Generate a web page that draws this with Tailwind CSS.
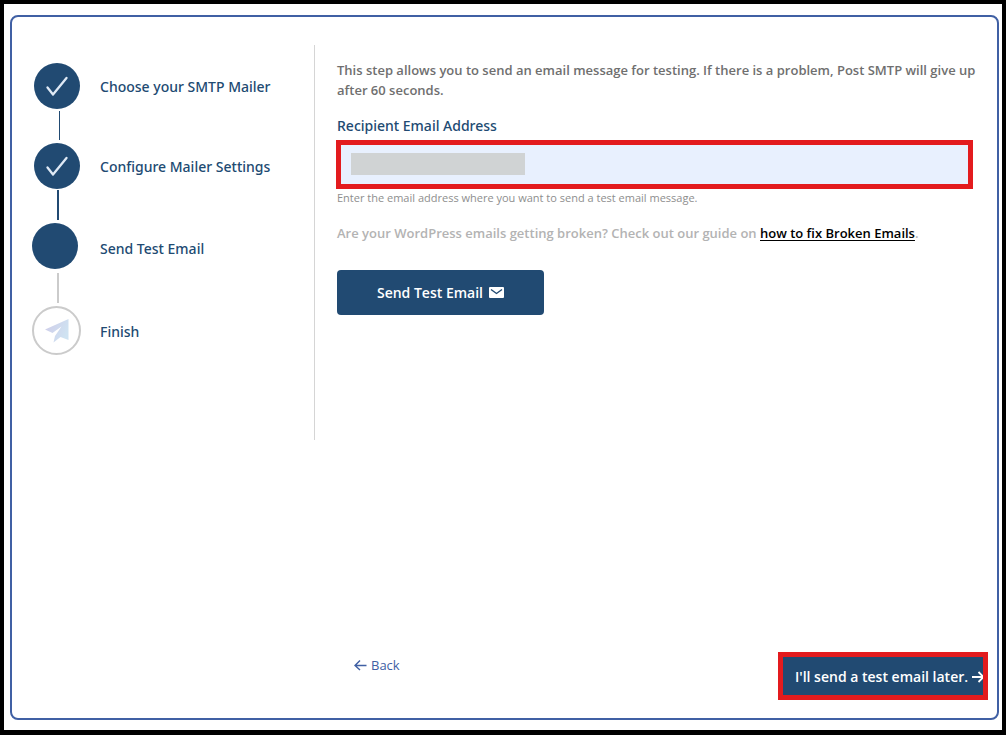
<!DOCTYPE html>
<html lang="en">
<head>
<meta charset="utf-8">
<meta name="viewport" content="width=device-width, initial-scale=1">
<title>Post SMTP Setup Wizard</title>
<script src="https://cdn.jsdelivr.net/npm/@tailwindcss/browser@4"></script>
</head>
<body class="min-h-screen flex border-4 border-b-[5px] border-black bg-white pl-1.5 pr-[3px] pt-[11px] pb-2.5 font-['Open_Sans','Noto_Sans',sans-serif] text-[#214a72]">
<div class="flex min-w-0 flex-1 flex-col rounded-lg border-2 border-[#4060a4] pt-7 pb-[18px]">
  <div class="flex">
    <nav class="w-[303px] shrink-0 border-r border-[#d5d5d5] pl-5 pt-[18px] min-h-[395px]" aria-label="Setup steps">
      <ol class="font-['Noto_Sans',sans-serif] text-sm font-medium leading-5">
        <li>
          <div class="flex items-center">
            <span class="flex h-[46px] w-[50px] justify-center"><svg class="size-[46px]" viewBox="0 0 46 46" fill="none"><circle cx="23" cy="23" r="23" fill="#214a72"/><path d="M13.500 24.500 19 31.500 32.500 15" stroke="#dfe9f5" stroke-width="2.300" stroke-linecap="round" stroke-linejoin="round"/></svg></span>
            <span class="ml-[18px] pt-0.5">Choose your SMTP Mailer</span>
          </div>
          <div class="ml-[27px] mt-0.5 mb-[3px] h-[29px] w-px bg-[#214a72]"></div>
        </li>
        <li>
          <div class="flex items-center">
            <span class="flex h-[46px] w-[50px] justify-center"><svg class="size-[46px]" viewBox="0 0 46 46" fill="none"><circle cx="23" cy="23" r="23" fill="#214a72"/><path d="M13.500 24.500 19 31.500 32.500 15" stroke="#dfe9f5" stroke-width="2.300" stroke-linecap="round" stroke-linejoin="round"/></svg></span>
            <span class="ml-[18px] pt-0.5">Configure Mailer Settings</span>
          </div>
          <div class="ml-[25px] mt-px mb-[3px] h-[30px] w-0.5 bg-[#214a72]"></div>
        </li>
        <li>
          <div class="flex items-center" aria-current="step">
            <span class="h-[46px] w-[50px]"><span class="block size-[46px] rounded-full bg-[#214a72]"></span></span>
            <span class="ml-[18px] pt-1.5">Send Test Email</span>
          </div>
          <div class="ml-[25px] mt-1 mb-[3px] h-[30px] w-0.5 bg-[#cbcbcb]"></div>
        </li>
        <li>
          <div class="flex items-center">
            <span class="w-[50px]"><span class="flex size-[49px] items-center justify-center rounded-full border-2 border-[#cbcbcb]"><svg class="size-6" viewBox="0 0 24 24"><defs><linearGradient id="plane" x1="0" y1="0" x2="1" y2="0.500"><stop offset="0" stop-color="#cfcbe8"/><stop offset="1" stop-color="#cfe3f2"/></linearGradient></defs><path d="M0 10.500 23.500 0V21L15.500 18 8.500 23.500 10 17 16.500 7.500 7.500 14Z" fill="url(#plane)"/></svg></span></span>
            <span class="ml-[18px] pt-0.5">Finish</span>
          </div>
        </li>
      </ol>
    </nav>
    <main class="min-w-0 flex-1 pt-[15px] pl-[22px] pr-6">
      <p class="-mr-4 text-[13px] font-semibold leading-5 text-[#6f6f6f]">This step allows you to send an email message for testing. If there is a problem, Post SMTP will give up after 60 seconds.</p>
      <label for="recipient" class="mt-4 block font-['Noto_Sans',sans-serif] text-sm font-medium leading-5">Recipient Email Address</label>
      <div class="relative mt-1 -ml-px">
        <input id="recipient" type="email" class="block h-[49px] w-full border-[5px] border-[#e31b1e] bg-[#e8f0fe] px-3 text-sm outline-none">
        <span class="absolute left-[15px] top-[13px] h-[22px] w-[174px] bg-[#d0d3d4]"></span>
      </div>
      <p class="text-[11px] leading-[18px] text-[#8e8e8e]">Enter the email address where you want to send a test email message.</p>
      <p class="mt-4 text-[13px] font-semibold leading-5 text-[#b3b3b3]">Are your WordPress emails getting broken? Check out our guide on <a href="#" class="text-black underline underline-offset-2">how to fix Broken Emails</a>.</p>
      <button type="button" class="mt-[27px] flex h-[45px] w-[207px] items-center justify-center gap-1.5 rounded bg-[#214a72] text-sm font-semibold text-white">Send Test Email
        <svg class="h-[11px] w-[15px]" viewBox="0 0 15 11" fill="none"><rect width="15" height="11" rx="1" fill="#fff"/><path d="M2 2.500 7.500 6.500 13 2.500" stroke="#214a72" stroke-width="1.400"/></svg>
      </button>
    </main>
  </div>
  <footer class="mt-auto flex items-start justify-between pl-[342px] pr-[9px]">
    <a href="#" class="mt-[3px] flex items-center gap-1 text-[13px] leading-5 text-[#4060a4]">
      <svg class="h-3 w-[13px]" viewBox="0 0 13 12" fill="none" stroke="#4060a4" stroke-width="1.500"><path d="M12.500 6.500H1.500M6 1.500 1 6.500 6 11"/></svg>Back</a>
    <button type="button" class="flex h-12 w-[210px] items-center gap-1 overflow-hidden whitespace-nowrap border-[5px] border-[#e31b1e] bg-[#214a72] pl-3 pt-px text-sm font-semibold text-white">I'll send a test email later.
      <svg class="h-3 w-[13px] shrink-0" viewBox="0 0 13 12" fill="none" stroke="#fff" stroke-width="1.800"><path d="M0 6H11.500M6.500 1 11.500 6 6.500 11"/></svg>
    </button>
  </footer>
</div>
</body>
</html>
